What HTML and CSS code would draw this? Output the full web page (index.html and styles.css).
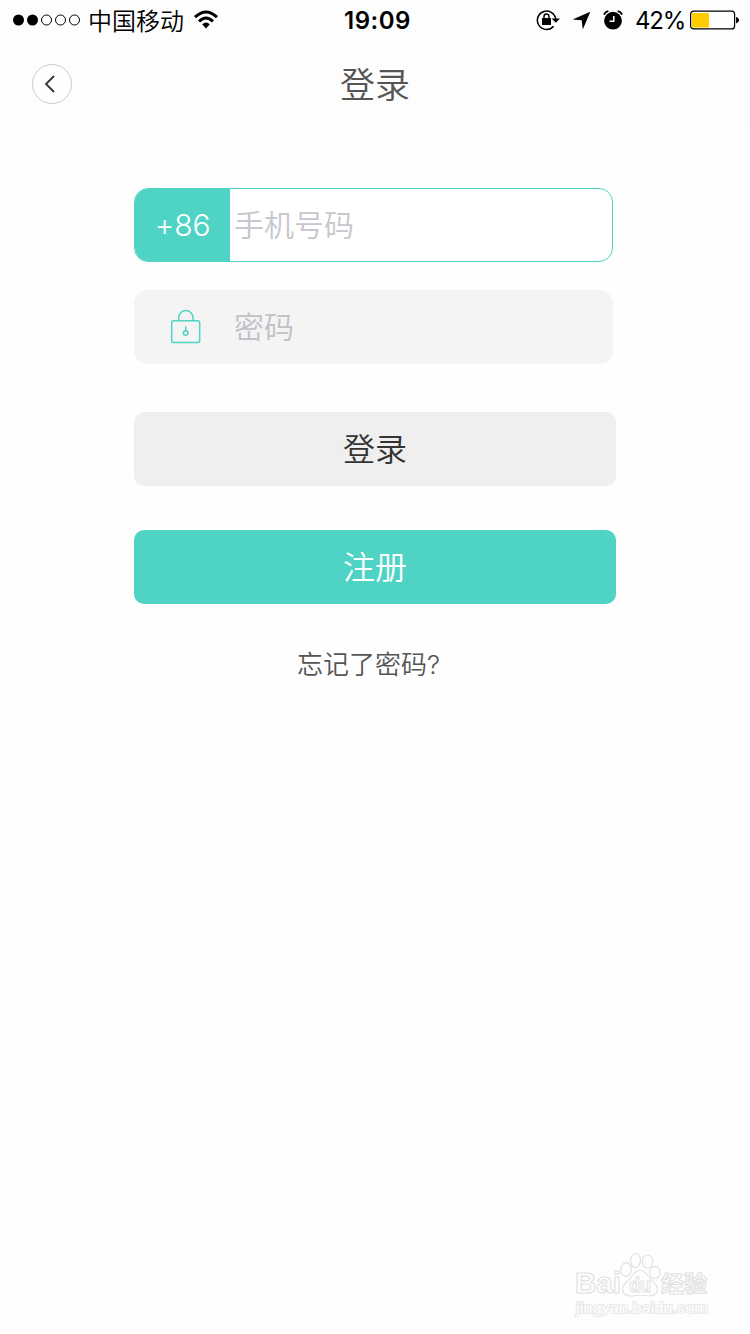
FILE: index.html
```html
<!doctype html>
<html lang="zh-CN">
<head>
  <meta charset="utf-8">
  <title>登录</title>
  <link rel="stylesheet" href="styles.css">
</head>
<body>
  <div class="status-bar">
    <div class="status-left">
      <svg class="signal" width="70" height="14" viewBox="0 0 70 14">
        <circle cx="6.5" cy="7" r="5.5"/>
        <circle cx="20.5" cy="7" r="5.5"/>
        <circle class="empty" cx="34.5" cy="7" r="5"/>
        <circle class="empty" cx="48.5" cy="7" r="5"/>
        <circle class="empty" cx="62.5" cy="7" r="5"/>
      </svg>
      <span class="carrier">中国移动</span>
      <svg class="wifi" width="26" height="20" viewBox="0 0 26 20">
        <path class="wave" d="M2 7.2Q13-3.2 24 7.2"/>
        <path class="wave" d="M6 11.3Q13 4.7 20 11.3"/>
        <path d="M9.2 14.3Q13 10.7 16.8 14.3L13 18.6Z"/>
      </svg>
    </div>
    <span class="time">19:09</span>
    <div class="status-right">
      <svg class="rotation" width="24" height="22" viewBox="0 0 24 22">
        <path class="ring" d="M17.6 17.2A9.2 9.2 0 1 1 19.7 10"/>
        <path d="M15.6 9.5H24L19.8 13.7Z"/>
        <rect x="6" y="9" width="9" height="7" rx="0.5"/>
        <path class="ring" d="M8 10V7.6a2.5 2.7 0 0 1 5 0V10"/>
      </svg>
      <svg class="location" width="19" height="19" viewBox="0 0 19 19">
        <path d="M18.3.8L10.8 18.4L9.7 9.2L.5 8.5Z"/>
      </svg>
      <svg class="alarm" width="20" height="20" viewBox="0 0 20 20">
        <circle cx="10" cy="10.7" r="8.9"/>
        <path class="bell" d="M1 4.7Q2.2 1.7 5.4 1.2M14.6 1.2Q17.8 1.7 19 4.7"/>
        <path class="hands" d="M10.8 6V11.3H6.5"/>
      </svg>
      <span class="percent">42%</span>
      <svg class="battery" width="50" height="20" viewBox="0 0 50 20">
        <rect class="shell" x="0.6" y="1.1" width="44" height="17.8" rx="3"/>
        <rect class="charge" x="2" y="3" width="17" height="14.5"/>
        <path d="M46 7Q49 7.8 49 10.2T46 13.5Z"/>
      </svg>
    </div>
  </div>

  <div class="header">
    <button class="back">
      <svg width="12" height="18" viewBox="0 0 12 18"><path d="M10 1L2 9L10 17"/></svg>
    </button>
    <h1>登录</h1>
  </div>

  <form class="login-form">
    <div class="field phone">
      <span class="area-code">+86</span>
      <input type="tel" placeholder="手机号码">
    </div>
    <div class="field password">
      <svg class="lock" width="32" height="36" viewBox="0 0 32 36">
        <rect x="1.7" y="11.7" width="28" height="21.8" rx="2"/>
        <path d="M8.7 11.5V8.8a7.2 7.2 0 0 1 14.4 0v2.7"/>
        <circle cx="15.7" cy="24" r="2.3"/>
        <path d="M15.7 21.5V17.3"/>
      </svg>
      <input type="password" placeholder="密码">
    </div>
    <button type="button" class="btn login">登录</button>
    <button type="button" class="btn register">注册</button>
    <a class="forgot">忘记了密码?</a>
  </form>

  <svg class="watermark" width="150" height="74" viewBox="0 0 150 74">
    <text class="brand" x="5" y="43" textLength="46" lengthAdjust="spacingAndGlyphs">Bai</text>
    <ellipse cx="56" cy="19.5" rx="5.2" ry="6.8"/>
    <ellipse cx="65.5" cy="10.5" rx="5" ry="7"/>
    <ellipse cx="77.5" cy="11.5" rx="5.3" ry="6.5"/>
    <ellipse cx="85" cy="22.5" rx="5.2" ry="6.2"/>
    <path d="M70 20.5C63 20.5 62 28 56.5 32C50 38 52 46 61 46Q70 44.5 79 46C88 46 90 38 83.5 32C78 28 77 20.5 70 20.5Z"/>
    <text class="du" x="59" y="42" textLength="22" lengthAdjust="spacingAndGlyphs">du</text>
    <text class="cn" x="91" y="42" textLength="46" lengthAdjust="spacingAndGlyphs">经验</text>
    <text class="site" x="6" y="63" textLength="132" lengthAdjust="spacingAndGlyphs">jingyan.baidu.com</text>
  </svg>
</body>
</html>
```

FILE: styles.css
```css
* { box-sizing: border-box; }
body { margin: 0; height: 1334px; display: flex; flex-direction: column; background: #fefefe; font-family: Inter, "Noto Sans CJK SC", sans-serif; font-weight: 350; overflow: hidden; }
button, input { font-family: inherit; font-weight: inherit; border: 0; padding: 0; }
svg { display: block; flex: none; }

.status-bar { height: 40px; display: grid; grid-template-columns: 1fr auto 1fr; align-items: center; padding: 0 10px 0 12px; background: #fdfdfd; color: #000; }
.status-left, .status-right { display: flex; align-items: center; }
.status-right { justify-content: flex-end; }
.signal .empty { fill: none; stroke: #000; }
.carrier { margin-left: 6px; font: 24px/40px "Noto Sans CJK SC", sans-serif; font-weight: 350; }
.wifi { margin-left: 9px; }
.wifi .wave { fill: none; stroke: #000; stroke-width: 3; }
.time { padding: 2px 0 0 3px; font-size: 24px; font-weight: 600; letter-spacing: 0.5px; line-height: 38px; }
.rotation .ring { fill: none; stroke: #000; stroke-width: 1.5; }
.location { margin-left: 12px; }
.alarm { margin-left: 12px; }
.alarm .bell { fill: none; stroke: #000; stroke-width: 1.8; }
.alarm .hands { fill: none; stroke: #fff; stroke-width: 1.5; }
.percent { margin-left: 12px; padding-top: 2px; font-size: 24px; font-weight: 400; letter-spacing: -1.2px; line-height: 38px; }
.battery { margin-left: 5px; }
.battery .shell { fill: none; stroke: #000; stroke-width: 1.2; }
.battery .charge { fill: #fc0; }

.header { height: 88px; display: grid; grid-template-columns: 40px 1fr 40px; align-items: center; padding: 0 32px; background: #fdfdfd; }
.header h1 { margin: 0; padding-top: 2px; text-align: center; font-size: 35px; font-weight: 350; line-height: 50px; color: #555; }
.back { width: 40px; height: 40px; display: flex; align-items: center; justify-content: center; padding-right: 4px; border: 1px solid #ccc; border-radius: 50%; background: #fefefe; }
.back path { fill: none; stroke: #333; stroke-width: 1.8; }

.login-form { width: 482px; margin: 60px 0 0 134px; display: flex; flex-direction: column; }
.field { width: 479.4px; height: 74px; display: flex; align-items: center; border-radius: 14px; overflow: hidden; }
.field input { flex: 1; min-width: 0; height: 60px; background: none; font-size: 30px; outline: none; }
.field input::placeholder { color: #c7c7cd; }
.phone { border: 1px solid #4fd3c4; background: #fff; }
.phone input { padding-left: 4px; }
.area-code { width: 95px; height: 74px; line-height: 75px; text-align: center; font-size: 30px; letter-spacing: -0.1px; color: #fff; background: #4fd3c4; }
.password { margin-top: 28px; padding-left: 36px; background: #f4f4f4; }
.password input { padding-left: 32px; }
.password input::placeholder { color: #c1c1c7; }
.lock { fill: none; stroke: #4fd3c4; stroke-width: 1.5; }
.btn { height: 74px; padding-top: 2px; border-radius: 10px; font-size: 32px; line-height: 72px; }
.login { margin-top: 48px; background: #efefef; color: #333; }
.register { margin-top: 44px; background: #4fd3c4; color: #fff; }
.forgot { margin: 42px 0 0 163px; font-size: 26px; line-height: 38px; color: #555; }

.watermark { margin: auto 30px 10px auto; fill: #fefefe; stroke: #e2e2e2; stroke-width: 1.2; font-family: "Liberation Sans", sans-serif; }
.watermark .brand { font-size: 30px; font-weight: 700; }
.watermark .du { font-size: 21px; font-weight: 700; }
.watermark .cn { font: 700 23px "Noto Sans CJK SC", sans-serif; }
.watermark .site { font-size: 14px; font-weight: 400; stroke: #e9e9e9; stroke-width: 2; paint-order: stroke; }
```
